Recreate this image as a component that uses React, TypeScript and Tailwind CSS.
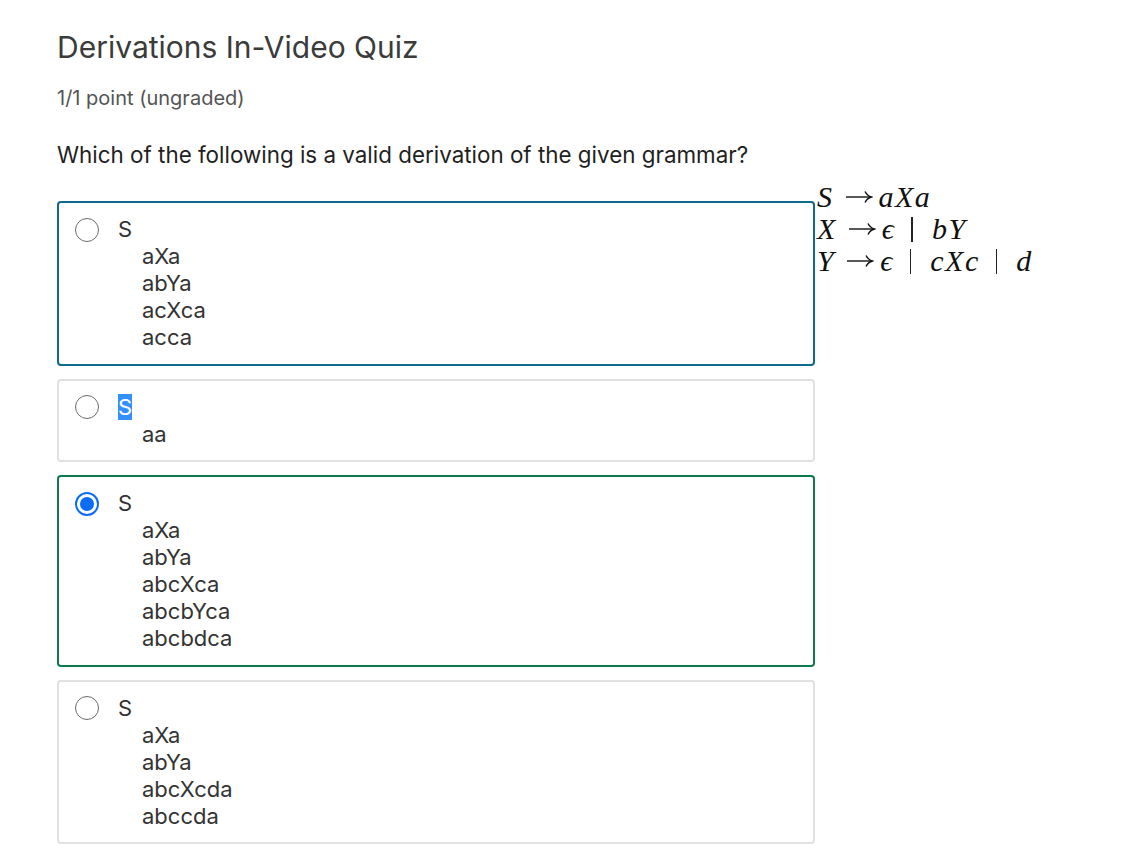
import React from "react";

type Option = {
  lines: string[];
  state: "active" | "idle" | "correct";
  selected?: boolean;
  highlightS?: boolean;
};

const options: Option[] = [
  { lines: ["aXa", "abYa", "acXca", "acca"], state: "active" },
  { lines: ["aa"], state: "idle", highlightS: true },
  {
    lines: ["aXa", "abYa", "abcXca", "abcbYca", "abcbdca"],
    state: "correct",
    selected: true,
  },
  { lines: ["aXa", "abYa", "abcXcda", "abccda"], state: "idle" },
];

function Radio({ checked }: { checked?: boolean }) {
  if (checked) {
    return (
      <span className="flex h-6 w-6 shrink-0 items-center justify-center rounded-full border-2 border-[#0b6cf5] bg-white">
        <span className="h-[14px] w-[14px] rounded-full bg-[#0b6cf5]" />
      </span>
    );
  }
  return (
    <span className="h-6 w-6 shrink-0 rounded-full border border-[#6b6b6b] bg-white" />
  );
}

function OptionCard({ option }: { option: Option }) {
  const border =
    option.state === "active"
      ? "border-[#0e6a8c]"
      : option.state === "correct"
        ? "border-[#0c7a4c]"
        : "border-[#e1e1e1]";
  return (
    <div
      className={`rounded-[4px] border-2 ${border} bg-white pt-[13px] pb-[12.5px] pl-[16px] text-[22px] leading-[27px] text-[#333]`}
    >
      <div className="flex items-center">
        <Radio checked={option.selected} />
        <span className="ml-[19px]">
          {option.highlightS ? (
            <span className="bg-[#3390ff] text-white">S</span>
          ) : (
            "S"
          )}
        </span>
      </div>
      {option.lines.map((l) => (
        <div key={l} className="pl-[67px]">
          {l}
        </div>
      ))}
    </div>
  );
}

// KaTeX-like right arrow
function Arrow() {
  return (
    <svg
      width="28"
      height="14"
      viewBox="0 0 28 14"
      className="ml-[11px] mr-[6px] inline-block"
      aria-hidden="true"
    >
      <path d="M1 7 H26" stroke="#111" strokeWidth="1.4" fill="none" />
      <path
        d="M20 1.5 C21.5 4.5 23.5 6.2 26.5 7 C23.5 7.8 21.5 9.5 20 12.5"
        stroke="#111"
        strokeWidth="1.4"
        fill="none"
      />
    </svg>
  );
}

function Bar() {
  return <span className="ml-[16px] mr-[19px] inline-block h-[25px] w-[1.5px] bg-[#222]" />;
}

function Grammar() {
  return (
    <div className="ml-[2px] whitespace-nowrap font-['Liberation_Serif',serif] text-[30px] leading-[32px] tracking-[1.5px] text-[#111] italic">
      <div className="flex h-[32px] items-center">
        <span>S</span>
        <Arrow />
        <span>aXa</span>
      </div>
      <div className="flex h-[32px] items-center">
        <span>X</span>
        <Arrow />
        <span>ϵ</span>
        <Bar />
        <span>bY</span>
      </div>
      <div className="flex h-[32px] items-center">
        <span>Y</span>
        <Arrow />
        <span>ϵ</span>
        <Bar />
        <span>cXc</span>
        <Bar />
        <span>d</span>
      </div>
    </div>
  );
}

export default function App() {
  return (
    <div className="min-h-screen bg-white px-[57px] pt-[28px] font-['Inter',sans-serif]">
      <h1 className="text-[30px] leading-[38px] text-[#3b3b3b]">
        Derivations In-Video Quiz
      </h1>
      <p className="mt-[19px] text-[20px] leading-[26px] text-[#545454]">
        1/1 point (ungraded)
      </p>
      <p className="mt-[30px] text-[22.4px] leading-[28px] text-[#1f1f1f]">
        Which of the following is a valid derivation of the given grammar?
      </p>
      <div className="mt-[12px] flex items-start">
        <div className="flex w-[758px] shrink-0 flex-col gap-[13px] pt-[20px]">
          {options.map((o, i) => (
            <OptionCard key={i} option={o} />
          ))}
        </div>
        <Grammar />
      </div>
    </div>
  );
}
